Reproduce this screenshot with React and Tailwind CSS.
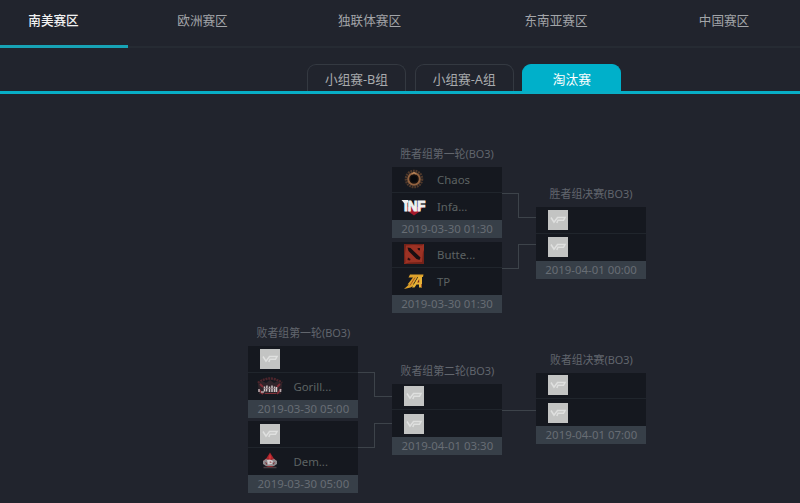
import clsx from "clsx";

const REGIONS = [
    { name: "南美赛区", width: "w-[128px] pr-[21px]", active: true },
    { name: "欧洲赛区", width: "w-[149px]" },
    { name: "独联体赛区", width: "w-[185px]" },
    { name: "东南亚赛区", width: "w-[188px]" },
    { name: "中国赛区", width: "w-[148px]" },
];

const STAGES = [
    { name: "小组赛-B组" },
    { name: "小组赛-A组" },
    { name: "淘汰赛", active: true },
];

function PlaceholderLogo() {
    return (
        <svg width="20" height="20" viewBox="0 0 20 20">
            <rect width="20" height="20" fill="#c3c4c3" />
            <path
                d="M3 7.5 L6 12.2 L9.5 7.5 H17 L15.5 10.3 H10 L8.8 13"
                fill="none"
                stroke="#dfe0df"
                strokeWidth="1.5"
            />
        </svg>
    );
}

function ChaosLogo() {
    return (
        <svg width="22" height="20" viewBox="0 0 22 20">
            <circle cx="11" cy="10" r="8" fill="none" stroke="#50392b" strokeWidth="2.6" strokeDasharray="1.8 0.8" />
            <circle cx="11" cy="10" r="5.8" fill="#17110f" stroke="#936340" strokeWidth="2" />
            <path d="M9 5 L11 3.5 L13 5" fill="none" stroke="#b98457" strokeWidth="1.2" />
            <circle cx="11" cy="10" r="3.2" fill="#08090c" />
        </svg>
    );
}

function InfamousLogo() {
    return (
        <svg width="28" height="24" viewBox="-1 -2 28 24" className="overflow-visible">
            <path d="M4 10 H22 L18 15 L13 18.5 L8 15 Z" fill="#a5192a" />
            <path d="M0.5 3 H7 V5.5 L3.5 6.5 Z" fill="#f1f1f1" />
            <text
                x="3"
                y="13.5"
                textLength="21.5"
                lengthAdjust="spacingAndGlyphs"
                fill="#f1f1f1"
                stroke="#f1f1f1"
                strokeWidth="1"
                className="font-['Liberation_Sans'] text-[14px] leading-none font-bold"
            >
                INF
            </text>
        </svg>
    );
}

function DotaLogo() {
    return (
        <svg width="20" height="20" viewBox="0 0 20 20">
            <rect width="20" height="20" fill="#9c3224" />
            <path d="M0 0 H20 L18 1.5 L10 1 L2 1.5 L1 10 L1.5 18 L0 20 Z M20 20 H0 L5 18.5 L18 18 L19 8 L20 6 Z" fill="#742219" />
            <path d="M3.5 3.5 L6.5 4 L16.5 13.5 L15.5 16 L12.5 15 L4.5 7 Z" fill="#1a0f12" />
            <path d="M13.5 4 L16 4 L16 6.5 L14 6 Z" fill="#2b0f11" />
            <path d="M4 13.5 L6.5 15 L6 16.5 L3.5 16 Z" fill="#2b0f11" />
        </svg>
    );
}

function ThunderLogo() {
    return (
        <svg width="22" height="20" viewBox="0 0 22 20">
            <path d="M7 2.5 H20.5 L20 5 H14.5 L10 12.5 H13 L7.5 15.5 L1 17 L6 12.5 H4.5 L10 5.5 H5.5 Z" fill="#dda12b" />
            <path d="M15.5 4.5 H19 V15.5 H16 V12.5 H13.5 L11.5 15.5 H9 Z" fill="#e9b337" />
            <path d="M16.2 7 V10.5 H14.2 Z" fill="#7b2419" />
            <path d="M12 5.5 L7 13.5 M18.5 12 V15" stroke="#97401d" strokeWidth="0.8" />
        </svg>
    );
}

function GorillasLogo() {
    return (
        <svg width="28" height="20" viewBox="0 0 28 20">
            <path d="M2 7 Q14 -2 26 7" fill="none" stroke="#4d252c" strokeWidth="2.5" strokeDasharray="2 0.8" />
            <path d="M2 8 L6 5 L10 7 L14 4 L18 7 L22 5 L26 8 L25 18 H3 Z" fill="#30242a" />
            <path d="M3 14 L7 18 M25 13 L21 18 M4 8 L7 11 M24 8 L21 11" stroke="#812d36" strokeWidth="1.8" />
            <path d="M3 13 V16 M24.5 13 V16 M5 16 H8" stroke="#b5a8ab" strokeWidth="1.6" />
            <path d="M8.5 10.5 V15.5 M11 9.5 L10.5 15.5 M13.5 10.5 V16 M16 9.5 V16 M18.5 10.5 V16 M20.5 11 V16" stroke="#cfc7c9" strokeWidth="1.5" />
            <path d="M8 12.5 H20" stroke="#8b7b80" strokeWidth="0.8" />
            <path d="M9 17.5 H20" stroke="#7e3037" />
        </svg>
    );
}

function DemonLogo() {
    return (
        <svg width="20" height="20" viewBox="0 0 20 20">
            <path d="M10 1.5 L13.5 7 L16.5 10 L14 15 L10 17 L6 15 L3 10 L6.5 7 Z" fill="#a7252c" />
            <path d="M3 10 L6 8 L10 9.5 L14 8 L17 10 V13 L14 15 H6 L3 13 Z" fill="#8f8b8e" />
            <path d="M7 9 L10 8.5 L13 10 L12 13 L8 13.5 Z" fill="#d5cdcf" />
            <path d="M5 11 L7 12 L6.5 14 Z M15 11 L13 12 L13.5 14 Z M9 11 L11 10.5 L11.5 12 Z" fill="#7d2930" />
            <path d="M8.5 6.5 L10 8.5 L11.5 6.5 L10 3 Z" fill="#d33135" />
            <path d="M3.5 16.5 H16.5" stroke="#4d3f43" strokeWidth="1.5" />
        </svg>
    );
}

function TeamRow({ team, divided }) {
    const Logo = team?.logo ?? PlaceholderLogo;

    return (
        <div
            className={clsx(
                "flex h-[26.75px] items-center bg-[#15181f]",
                divided && "border-b border-[#20252c]"
            )}
        >
            <div className="flex w-[43px] shrink-0 justify-center">
                <Logo />
            </div>
            <span className="pl-[2px] text-[11.4px] text-[#5d6363]">{team?.name}</span>
        </div>
    );
}

function Match({ teams = [], time }) {
    return (
        <div className="w-[110px]">
            <TeamRow team={teams[0]} divided />
            <TeamRow team={teams[1]} />
            <div className="h-[18px] bg-[#373f48] text-center text-[11.4px] leading-[18px] text-[#676d74]">
                {time}
            </div>
        </div>
    );
}

function Round({ title, children }) {
    return (
        <section className="w-[110px]">
            <h3 className="h-[21px] text-center text-[10.9px] leading-[15px] whitespace-nowrap text-[#62666d]">
                {title}
            </h3>
            <div className="flex flex-col gap-[3.5px]">{children}</div>
        </section>
    );
}

function Connector() {
    return (
        <div className="flex w-[34px] flex-col gap-[26px]">
            <div className="flex h-[25px]">
                <div className="w-[17px] border-t border-r border-[#3d434a]" />
                <div className="w-[17px] border-b border-[#3d434a]" />
            </div>
            <div className="flex h-[25px]">
                <div className="w-[17px] border-r border-b border-[#3d434a]" />
                <div className="w-[17px] border-t border-[#3d434a]" />
            </div>
        </div>
    );
}

export default function App() {
    return (
        <div className="h-[503px] w-[800px] overflow-hidden bg-[#21242d] font-['Noto_Sans','Noto_Sans_CJK_SC',sans-serif]">
            <nav className="flex h-[48px] border-b-2 border-[#262b33]">
                {REGIONS.map((region) => (
                    <a
                        key={region.name}
                        className={clsx(
                            "h-[48px] text-center text-[12.6px] leading-[41px]",
                            region.width,
                            region.active
                                ? "border-b-3 border-[#17a3b5] font-medium text-[#f2f2f2]"
                                : "text-[#a3a5a9]"
                        )}
                    >
                        {region.name}
                    </a>
                ))}
            </nav>

            <div className="flex h-[46px] items-end gap-[8.7px] border-b-3 border-[#08aec6] pl-[307px]">
                {STAGES.map((stage) => (
                    <button
                        key={stage.name}
                        className={clsx(
                            "h-[27px] w-[99px] rounded-t-[9px] border border-b-0 text-[12.7px] leading-[29px]",
                            stage.active
                                ? "border-[#00b0ca] bg-[#00b0ca] text-white"
                                : "border-[#343941] text-[#a9abae]"
                        )}
                    >
                        {stage.name}
                    </button>
                ))}
            </div>

            {/* upper bracket */}
            <div className="flex pt-[51.5px] pl-[392px]">
                <Round title="胜者组第一轮(BO3)">
                    <Match
                        teams={[
                            { name: "Chaos", logo: ChaosLogo },
                            { name: "Infa...", logo: InfamousLogo },
                        ]}
                        time="2019-03-30 01:30"
                    />
                    <Match
                        teams={[
                            { name: "Butte...", logo: DotaLogo },
                            { name: "TP", logo: ThunderLogo },
                        ]}
                        time="2019-03-30 01:30"
                    />
                </Round>
                <div className="pt-[47px]">
                    <Connector />
                </div>
                <div className="pt-[40.5px]">
                    <Round title="胜者组决赛(BO3)">
                        <Match time="2019-04-01 00:00" />
                    </Round>
                </div>
            </div>

            {/* lower bracket */}
            <div className="flex pt-[12px] pl-[248.4px]">
                <Round title="败者组第一轮(BO3)">
                    <Match
                        teams={[null, { name: "Gorill...", logo: GorillasLogo }]}
                        time="2019-03-30 05:00"
                    />
                    <Match
                        teams={[null, { name: "Dem...", logo: DemonLogo }]}
                        time="2019-03-30 05:00"
                    />
                </Round>
                <div className="pt-[47px]">
                    <Connector />
                </div>
                <div className="pt-[37.5px]">
                    <Round title="败者组第二轮(BO3)">
                        <Match time="2019-04-01 03:30" />
                    </Round>
                </div>
                <div className="pt-[85px]">
                    <div className="w-[34px] border-t border-[#3d434a]" />
                </div>
                <div className="pt-[26.5px]">
                    <Round title="败者组决赛(BO3)">
                        <Match time="2019-04-01 07:00" />
                    </Round>
                </div>
            </div>
        </div>
    );
}
